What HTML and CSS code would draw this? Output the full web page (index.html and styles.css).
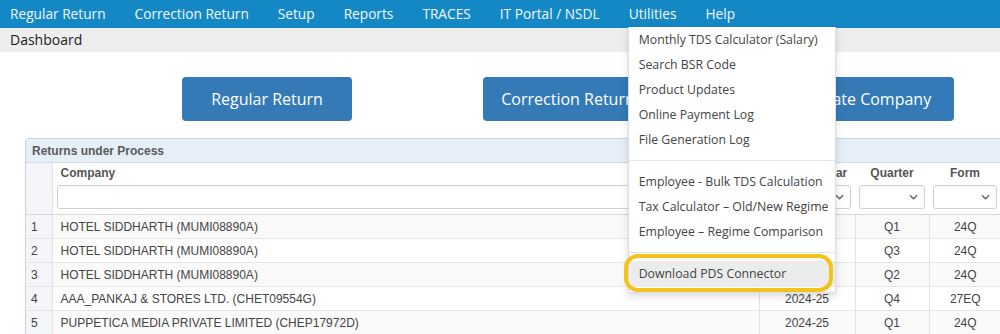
FILE: index.html
```html
<!DOCTYPE html>
<html lang="en">
<head>
  <meta charset="UTF-8" />
  <title>Dashboard</title>
  <link rel="stylesheet" href="styles.css">
</head>
<body>
  <nav class="topnav">
    <ul class="menu">
      <li>Regular Return</li>
      <li>Correction Return</li>
      <li>Setup</li>
      <li>Reports</li>
      <li>TRACES</li>
      <li>IT Portal / NSDL</li>
      <li class="has-dropdown">Utilities
        <div class="dropdown">
          <div class="dd-item">Monthly TDS Calculator (Salary)</div>
          <div class="dd-item">Search BSR Code</div>
          <div class="dd-item">Product Updates</div>
          <div class="dd-item">Online Payment Log</div>
          <div class="dd-item">File Generation Log</div>
          <div class="dd-divider"></div>
          <div class="dd-item">Employee - Bulk TDS Calculation</div>
          <div class="dd-item">Tax Calculator – Old/New Regime</div>
          <div class="dd-item">Employee – Regime Comparison</div>
          <div class="dd-divider"></div>
          <div class="dd-item active">Download PDS Connector</div>
          <div class="marker"></div>
        </div>
      </li>
      <li>Help</li>
    </ul>
  </nav>

  <div class="crumb">Dashboard</div>

  <div class="actions">
    <a class="btn">Regular Return</a>
    <a class="btn">Correction Return</a>
    <a class="btn">Create Company</a>
  </div>

  <div class="panel">
    <div class="panel-title">Returns under Process</div>
    <table class="grid">
      <colgroup>
        <col class="c-num">
        <col class="c-company">
        <col class="c-year">
        <col class="c-quarter">
        <col class="c-form">
      </colgroup>
      <thead>
        <tr>
          <th class="num"></th>
          <th class="left">Company<div class="filter"></div></th>
          <th>Financial Year<div class="filter select"><svg viewBox="0 0 10 6"><path d="M1 1l4 4 4-4" /></svg></div></th>
          <th>Quarter<div class="filter select"><svg viewBox="0 0 10 6"><path d="M1 1l4 4 4-4" /></svg></div></th>
          <th>Form<div class="filter select"><svg viewBox="0 0 10 6"><path d="M1 1l4 4 4-4" /></svg></div></th>
        </tr>
      </thead>
      <tbody>
        <tr><td class="num">1</td><td class="left">HOTEL SIDDHARTH (MUMI08890A)</td><td>2024-25</td><td>Q1</td><td>24Q</td></tr>
        <tr><td class="num">2</td><td class="left">HOTEL SIDDHARTH (MUMI08890A)</td><td>2024-25</td><td>Q3</td><td>24Q</td></tr>
        <tr><td class="num">3</td><td class="left">HOTEL SIDDHARTH (MUMI08890A)</td><td>2024-25</td><td>Q2</td><td>24Q</td></tr>
        <tr><td class="num">4</td><td class="left">AAA_PANKAJ &amp; STORES LTD. (CHET09554G)</td><td>2024-25</td><td>Q4</td><td>27EQ</td></tr>
        <tr><td class="num">5</td><td class="left">PUPPETICA MEDIA PRIVATE LIMITED (CHEP17972D)</td><td>2024-25</td><td>Q1</td><td>24Q</td></tr>
      </tbody>
    </table>
  </div>
</body>
</html>
```

FILE: styles.css
```css
body {
  margin: 0;
  font-family: "Open Sans", "Noto Sans", sans-serif;
  background: #fff;
  overflow: hidden;
}
.topnav {
  background: #1488c5;
  height: 28px;
}
.menu {
  list-style: none;
  margin: 0;
  padding: 0 0 0 10px;
  display: flex;
  gap: 29px;
  height: 28px;
  align-items: center;
}
.menu li {
  color: #f2f8fc;
  font-size: 13.7px;
  position: relative;
  line-height: 28px;
}
.dropdown {
  position: absolute;
  top: 27px;
  left: -1px;
  width: 206px;
  background: #fff;
  border: 1px solid #ddd;
  border-top: none;
  box-shadow: 0 3px 8px rgba(0,0,0,0.15);
  padding-bottom: 5px;
  z-index: 10;
}
.dd-item {
  color: #444;
  font-size: 12.3px;
  line-height: 25px;
  padding: 0 10px;
  white-space: nowrap;
}
.dd-item.active {
  background: #ececec;
  line-height: 26px;
}
.dd-divider {
  height: 1px;
  background: #e5e5e5;
  margin: 8px 0;
}
.marker {
  position: absolute;
  left: -5px;
  right: 2px;
  bottom: 0;
  height: 38px;
  box-sizing: border-box;
  border: 4px solid #f3c31c;
  border-radius: 14px;
}
.crumb {
  background: #eeeeee;
  color: #222;
  font-size: 14px;
  line-height: 24px;
  padding-left: 10px;
}
.actions {
  display: flex;
  gap: 131px;
  padding: 25px 0 17px 182px;
}
.btn {
  display: block;
  width: 170px;
  height: 44px;
  line-height: 44px;
  text-align: center;
  background: #337ab7;
  color: #fff;
  font-size: 16px;
  border-radius: 4px;
  white-space: nowrap;
}
.panel {
  margin-left: 25px;
  width: 975px;
  border: 1px solid #c8d3df;
  border-radius: 3px 0 0 0;
  font-family: "Liberation Sans", Arial, sans-serif;
  font-size: 12px;
}
.panel-title {
  background: #e6eef7;
  color: #5a5a5a;
  font-weight: bold;
  height: 23px;
  line-height: 24px;
  padding-left: 6px;
  border-bottom: 1px solid #d3dbe5;
}
.grid {
  border-collapse: collapse;
  table-layout: fixed;
  width: 100%;
}
.c-num { width: 26px; }
.c-company { width: 707px; }
.c-year { width: 96px; }
.c-quarter { width: 74px; }
.c-form { width: 72px; }
.grid th {
  color: #555;
  font-weight: bold;
  text-align: center;
  vertical-align: top;
  padding: 3px 4px 5px 4px;
  height: 43px;
  line-height: 15px;
  background: #fff;
  border-bottom: 1px solid #d8d8d8;
}
.grid th.left {
  text-align: left;
  padding-left: 8px;
}
.grid th.num,
.grid td.num {
  background: #f3f5f8;
  border-right: 1px solid #e2e2e2;
}
.filter {
  position: relative;
  height: 22px;
  margin: 4px 0 0 -4px;
  border: 1px solid #cfcfcf;
  border-radius: 3px;
  background: #fff;
}
.filter.select {
  margin-left: 0;
}
.filter svg {
  position: absolute;
  right: 6px;
  top: 8px;
  width: 9px;
  height: 6px;
  fill: none;
  stroke: #666;
  stroke-width: 1.6;
}
.grid td {
  height: 23px;
  color: #444;
  text-align: center;
  border-top: 1px solid #e6e6e6;
  border-left: 1px solid #e2e2e2;
  padding: 0 4px;
  white-space: nowrap;
}
.grid td.left {
  text-align: left;
  padding-left: 8px;
}
.grid td.num {
  text-align: left;
  padding-left: 5px;
  border-left: none;
}
.grid tbody tr:nth-child(odd) td {
  background: #fafafa;
}
.grid tbody tr:nth-child(odd) td.num {
  background: #f3f5f8;
}
```
